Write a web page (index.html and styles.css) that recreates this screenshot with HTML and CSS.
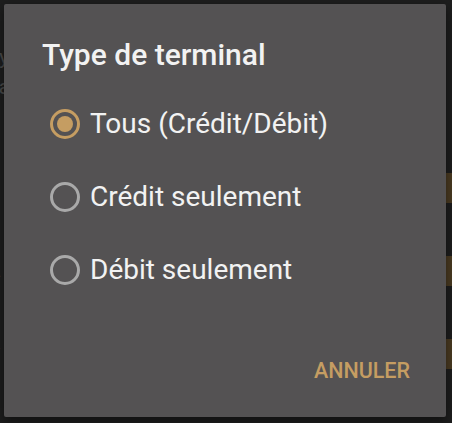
FILE: index.html
```html
<!DOCTYPE html>
<html lang="fr">

<head>
    <meta charset="UTF-8">
    <title>Type de terminal</title>
    <meta name="viewport" content="width=device-width, initial-scale=1.0">
    <link rel="stylesheet" href="styles.css">
</head>

<body>

    <div class="screen">
        <p class="bg-top">La valeur est : Détail</p>
        <div class="bg-row"><span class="bg-text">Ty</span></div>
        <div class="bg-row small"><span class="bg-text">Ta</span></div>
        <div class="bg-row field first"><span class="bg-text">l</span><span class="bg-bar"></span></div>
        <div class="bg-row field"><span class="bg-text">A</span><span class="bg-bar"></span></div>
        <div class="bg-row field"><span class="bg-text">V</span><span class="bg-bar"></span></div>
    </div>

    <div class="dialog">
        <h2>Type de terminal</h2>

        <label class="option">
            <span class="radio checked"></span>
            <span>Tous (Crédit/Débit)</span>
        </label>
        <label class="option">
            <span class="radio"></span>
            <span>Crédit seulement</span>
        </label>
        <label class="option">
            <span class="radio"></span>
            <span>Débit seulement</span>
        </label>

        <div class="actions">
            <button class="btn-cancel">ANNULER</button>
        </div>
    </div>

</body>

</html>
```

FILE: styles.css
```css
body {
    margin: 0;
    background: #1e1e1e;
    font-family: Roboto, "Noto Sans", sans-serif;
    overflow: hidden;
}

/* fond assombri derrière la boîte */
.screen {
    height: 423px;
    color: #4a4a4a;
}

.bg-top {
    margin: 0;
    padding-left: 2px;
    font-size: 20px;
    line-height: 10px;
    height: 4px;
    overflow: hidden;
    position: relative;
    top: -6px;
}

.bg-row {
    display: flex;
    justify-content: space-between;
    align-items: center;
    height: 30px;
    margin-top: 38px;
}

.bg-row.small {
    margin-top: 0;
}

.bg-text {
    font-size: 20px;
    margin-left: -12px;
}

.bg-row.field {
    margin-top: 53px;
}

.bg-row.field.first {
    margin-top: 71px;
}

.bg-row.field .bg-text {
    margin-left: -10px;
    font-size: 16px;
}

.bg-bar {
    width: 6px;
    height: 30px;
    background: #4b3b22;
}

.dialog {
    position: absolute;
    left: 4px;
    top: 4px;
    width: 442px;
    height: 413px;
    box-sizing: border-box;
    background: #545253;
    border-radius: 2px;
    padding: 33px 36px 0 38px;
    box-shadow: 0 4px 12px rgba(0, 0, 0, 0.5);
}

.dialog h2 {
    margin: 0 0 14px;
    font-size: 30px;
    font-weight: 500;
    color: #f2f2f2;
    line-height: 36px;
}

.option {
    display: flex;
    align-items: center;
    gap: 10px;
    height: 73px;
    font-size: 28px;
    color: #f2f2f2;
}

.radio {
    width: 30px;
    height: 30px;
    box-sizing: border-box;
    border: 3px solid #a9a9a9;
    border-radius: 50%;
    margin-left: 8px;
    display: flex;
    align-items: center;
    justify-content: center;
}

.radio.checked {
    border-color: #c59d62;
}

.radio.checked::after {
    content: "";
    width: 16px;
    height: 16px;
    border-radius: 50%;
    background: #c59d62;
}

.actions {
    display: flex;
    justify-content: flex-end;
    margin-top: 52px;
}

.btn-cancel {
    background: none;
    border: none;
    padding: 0;
    font-family: inherit;
    font-size: 21.5px;
    font-weight: 500;
    color: #c59d62;
    cursor: pointer;
}
```
